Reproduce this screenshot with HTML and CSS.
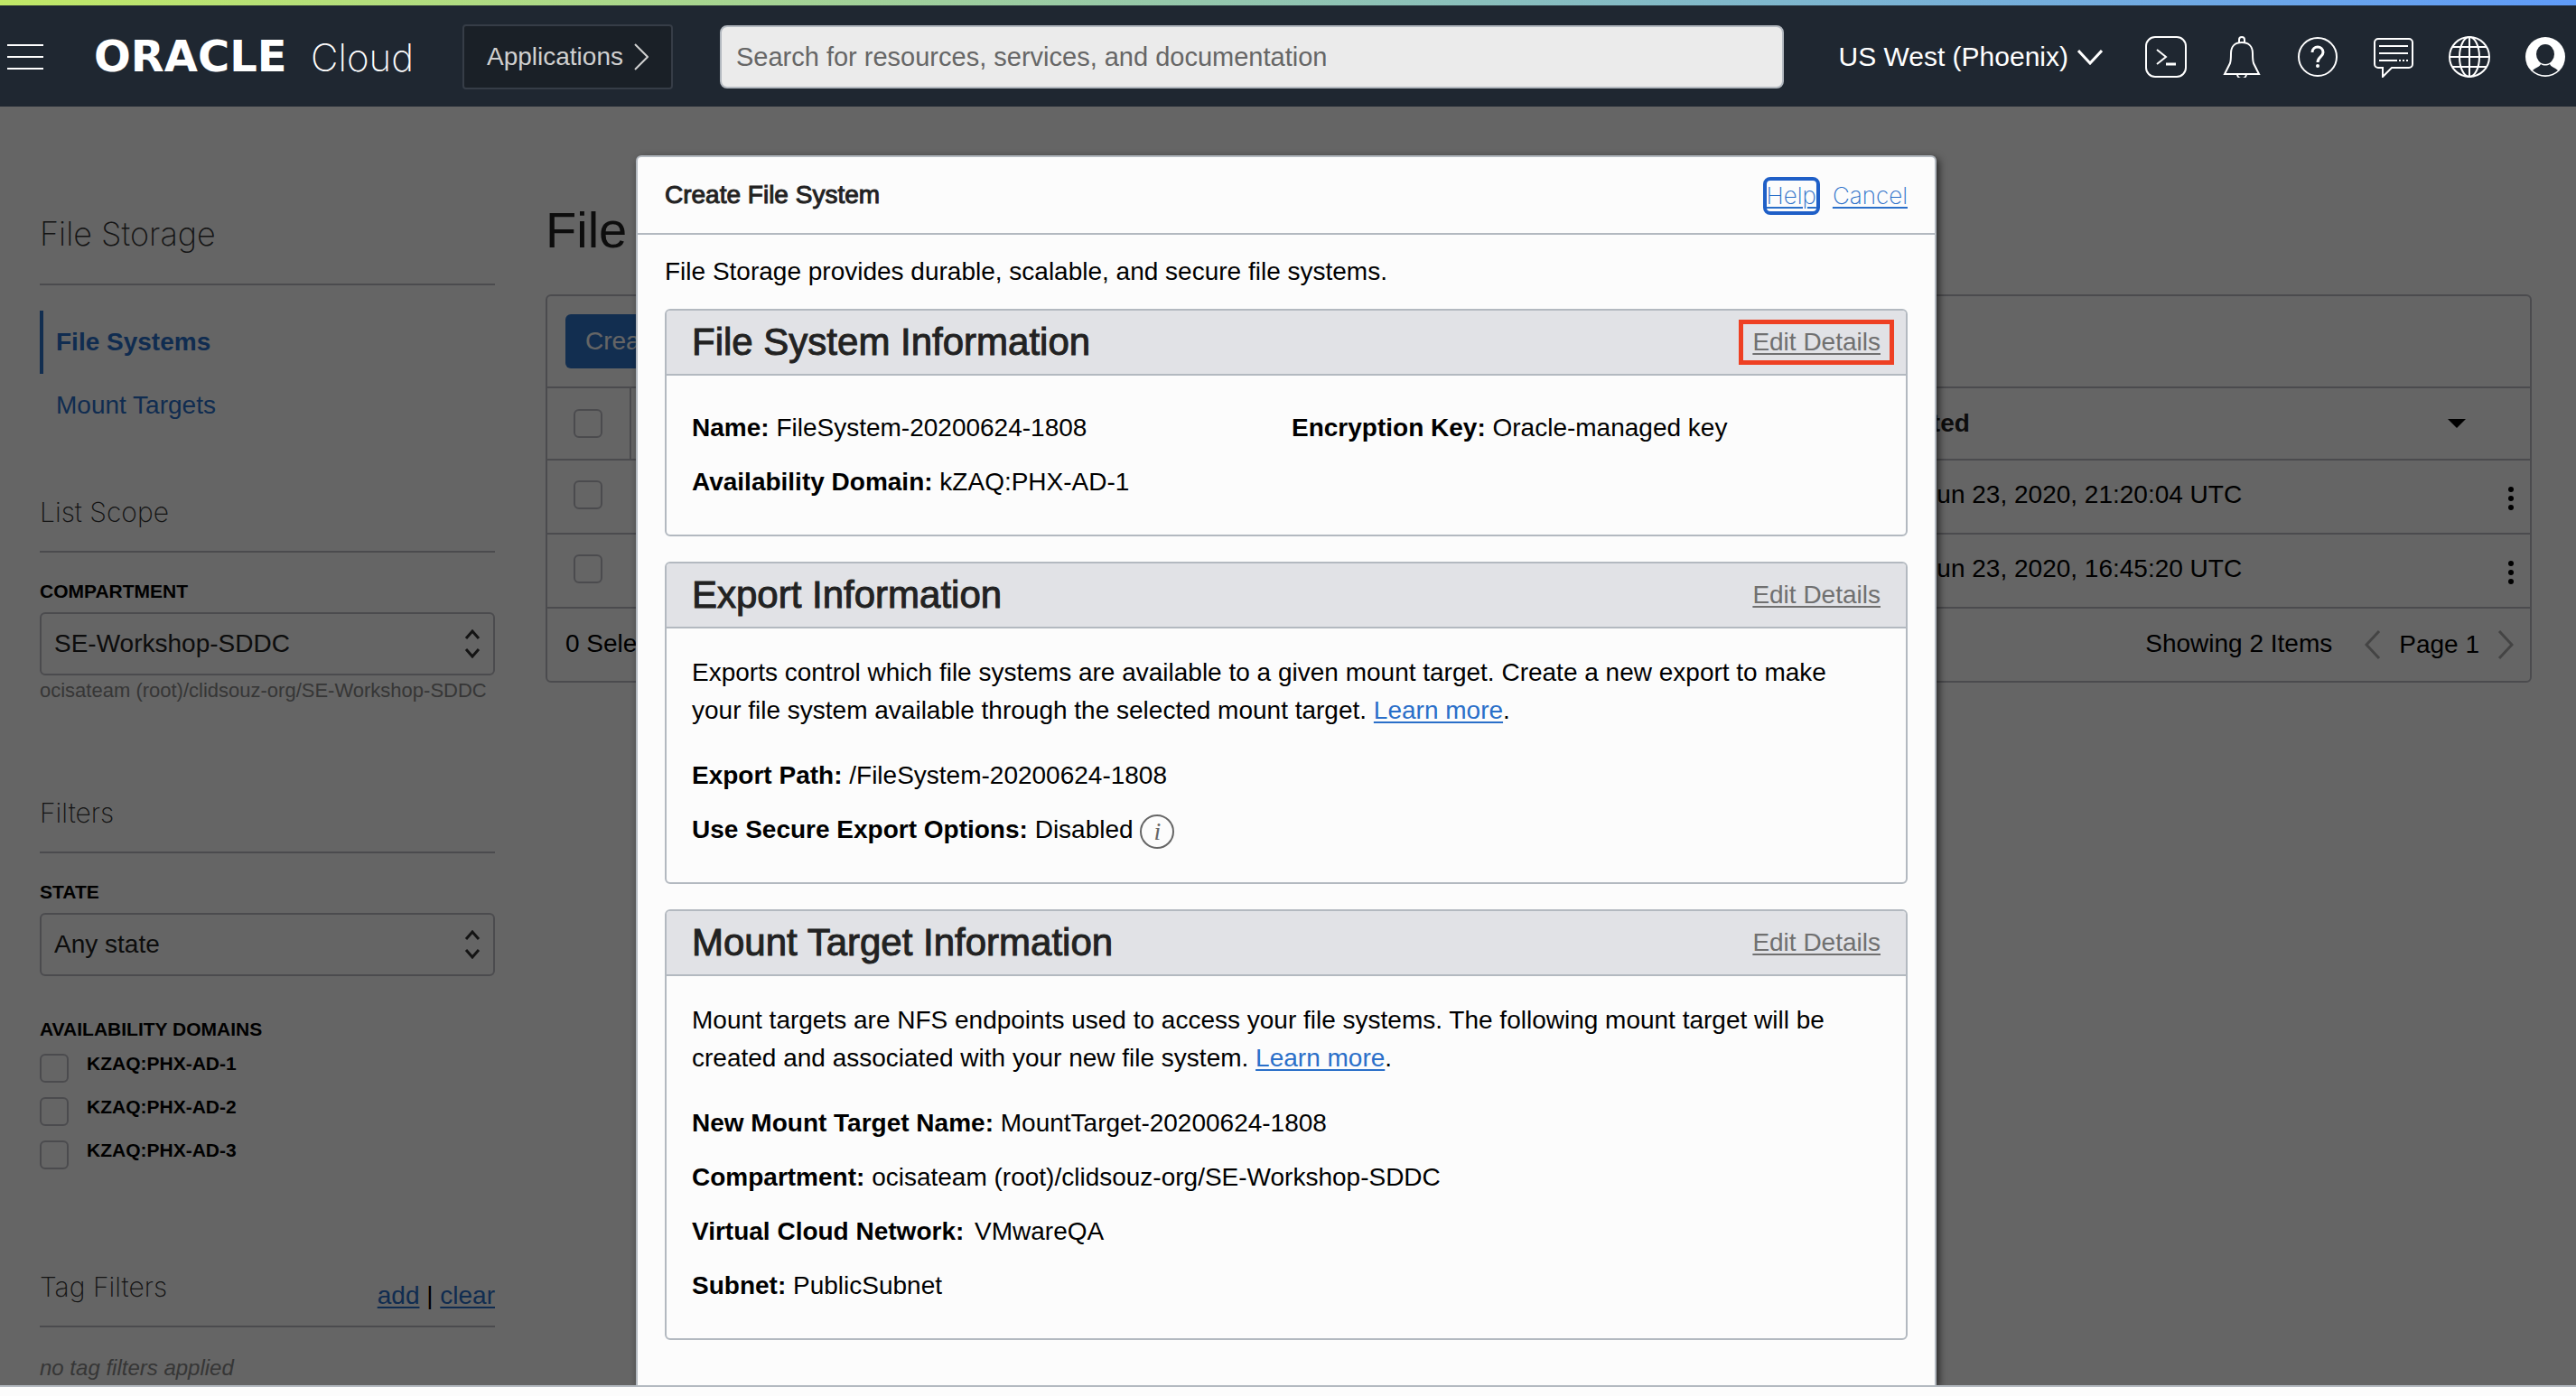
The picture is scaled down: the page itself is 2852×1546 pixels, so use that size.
FILE: index.html
```html
<!DOCTYPE html>
<html lang="en">
<head>
<meta charset="utf-8">
<title>Create File System</title>
<link rel="stylesheet" href="styles.css">
</head>
<body>
<div class="shell">
  <header class="topbar">
    <button class="icon-btn menu-btn" type="button">
      <svg viewBox="0 0 40 40" width="40" height="40"><path d="M0 7h40M0 20h40M0 33h40" stroke="#fff" stroke-width="2"/></svg>
    </button>
    <a class="brand" href="#"><span class="brand-name">ORACLE</span><span class="brand-product">Cloud</span></a>
    <button class="apps-btn" type="button">Applications
      <svg viewBox="0 0 16 30" width="16" height="30" fill="none"><path d="M1 1l14 14L1 29" stroke="#d0d0d0" stroke-width="2"/></svg>
    </button>
    <input class="search" type="search" placeholder="Search for resources, services, and documentation">
    <button class="region-btn" type="button">US West (Phoenix)
      <svg viewBox="0 0 28 17" width="28" height="17" fill="none"><path d="M1 1l13 14L27 1" stroke="#fff" stroke-width="3"/></svg>
    </button>
    <nav class="tools">
      <button class="icon-btn" type="button">
        <svg viewBox="0 0 46 46" width="46" height="46" fill="none" stroke="#fff" stroke-width="2"><rect x="1" y="1" width="44" height="44" rx="10"/><path d="M13 15l10 8-10 8"/><path d="M23 31h11" stroke-width="3"/></svg>
      </button>
      <button class="icon-btn" type="button">
        <svg viewBox="0 0 46 46" width="46" height="46" fill="none" stroke="#fff" stroke-width="2"><path d="M20 8V4a3 3 0 0 1 6 0v4"/><path d="M4 42l6-12c1-3 1-6 1-11C11 11 16 7 23 7s12 4 12 12c0 5 0 8 1 11l6 12z"/><path d="M18 42a5 5 0 0 0 10 0"/></svg>
      </button>
      <button class="icon-btn" type="button">
        <svg viewBox="0 0 46 46" width="46" height="46" fill="none" stroke="#fff" stroke-width="2"><circle cx="23" cy="23" r="21"/><path d="M17 18c0-8 12-8 12 0 0 5-6 5-6 11" stroke-width="3"/><circle cx="23" cy="33" r="1"/></svg>
      </button>
      <button class="icon-btn" type="button">
        <svg viewBox="0 0 46 46" width="46" height="46" fill="none" stroke="#fff" stroke-width="2"><path d="M6 3h34a4 4 0 0 1 4 4v24a4 4 0 0 1-4 4H21L11 45V35H6a4 4 0 0 1-4-4V7a4 4 0 0 1 4-4z"/><path d="M7 11h32M7 19h32M7 27h20"/><path d="M29 27h10" stroke-dasharray="2 2"/></svg>
      </button>
      <button class="icon-btn" type="button">
        <svg viewBox="0 0 46 46" width="46" height="46" fill="none" stroke="#fff" stroke-width="2"><circle cx="23" cy="23" r="22"/><ellipse cx="23" cy="23" rx="11" ry="22"/><path d="M23 1v44M1 23h44M4 12h38M4 34h38"/></svg>
      </button>
      <button class="icon-btn" type="button">
        <svg viewBox="0 0 46 46" width="46" height="46"><circle cx="23" cy="23" r="22" fill="#fff"/><ellipse cx="23" cy="20" rx="10" ry="11" fill="#1f2731"/><path d="M9 38c3-3 8-4 9-7 3 2 7 2 10 0 1 3 6 4 9 7-8 7-20 7-28 0z" fill="#1f2731"/></svg>
      </button>
    </nav>
  </header>

  <div class="stage">
    <div class="page">
      <aside class="sidebar">
        <h2 class="side-title">File Storage</h2>
        <nav class="side-nav">
          <a class="side-link side-link-active" href="#">File Systems</a>
          <a class="side-link" href="#">Mount Targets</a>
        </nav>

        <h3 class="side-heading">List Scope</h3>
        <label class="field-label" for="compartment">COMPARTMENT</label>
        <div class="select-wrap">
          <select id="compartment" class="select"><option>SE-Workshop-SDDC</option></select>
          <svg class="select-arrows" viewBox="0 0 18 32" width="18" height="32" fill="none"><path d="M2 10l7-8 7 8M2 22l7 8 7-8" stroke="#333" stroke-width="3"/></svg>
        </div>
        <p class="field-hint">ocisateam (root)/clidsouz-org/SE-Workshop-SDDC</p>

        <h3 class="side-heading side-heading-filters">Filters</h3>
        <label class="field-label" for="state">STATE</label>
        <div class="select-wrap">
          <select id="state" class="select"><option>Any state</option></select>
          <svg class="select-arrows" viewBox="0 0 18 32" width="18" height="32" fill="none"><path d="M2 10l7-8 7 8M2 22l7 8 7-8" stroke="#333" stroke-width="3"/></svg>
        </div>
        <fieldset class="domains">
          <legend class="field-label">AVAILABILITY DOMAINS</legend>
          <label class="domain"><input class="check" type="checkbox">KZAQ:PHX-AD-1</label>
          <label class="domain"><input class="check" type="checkbox">KZAQ:PHX-AD-2</label>
          <label class="domain"><input class="check" type="checkbox">KZAQ:PHX-AD-3</label>
        </fieldset>

        <div class="side-heading side-heading-tags">
          <h3 class="side-heading-text">Tag Filters</h3>
          <span class="tag-actions"><a href="#">add</a> | <a href="#">clear</a></span>
        </div>
        <p class="empty-note">no tag filters applied</p>
      </aside>

      <main class="main">
        <h1 class="page-title">File Systems</h1>
        <section class="panel">
          <div class="toolbar"><button class="create-btn" type="button">Create File System</button></div>
          <table class="table">
            <colgroup><col class="col-check"><col><col class="col-created"><col class="col-menu"></colgroup>
            <thead>
              <tr>
                <th class="cell-check"><input class="check" type="checkbox"></th>
                <th></th>
                <th colspan="2" class="cell-sort"><span class="sort">Created <svg viewBox="0 0 20 10" width="20" height="10"><path d="M0 0h20L10 10z"/></svg></span></th>
              </tr>
            </thead>
            <tbody>
              <tr>
                <td class="cell-check"><input class="check" type="checkbox"></td>
                <td></td>
                <td class="cell-date">Tue, Jun 23, 2020, 21:20:04 UTC</td>
                <td class="cell-menu"><button class="icon-btn" type="button"><svg viewBox="0 0 6 28" width="6" height="28"><circle cx="3" cy="4" r="3"/><circle cx="3" cy="14" r="3"/><circle cx="3" cy="24" r="3"/></svg></button></td>
              </tr>
              <tr>
                <td class="cell-check"><input class="check" type="checkbox"></td>
                <td></td>
                <td class="cell-date">Tue, Jun 23, 2020, 16:45:20 UTC</td>
                <td class="cell-menu"><button class="icon-btn" type="button"><svg viewBox="0 0 6 28" width="6" height="28"><circle cx="3" cy="4" r="3"/><circle cx="3" cy="14" r="3"/><circle cx="3" cy="24" r="3"/></svg></button></td>
              </tr>
            </tbody>
          </table>
          <div class="table-footer">
            <span class="count">0 Selected</span>
            <span class="count count-total">Showing 2 Items</span>
            <button class="icon-btn" type="button"><svg viewBox="0 0 18 32" width="18" height="32" fill="none"><path d="M16 1L2 16l14 15" stroke="#aaa" stroke-width="3"/></svg></button>
            <span>Page 1</span>
            <button class="icon-btn" type="button"><svg viewBox="0 0 18 32" width="18" height="32" fill="none"><path d="M2 1l14 15L2 31" stroke="#aaa" stroke-width="3"/></svg></button>
          </div>
        </section>
      </main>
    </div>

    <div class="backdrop">
      <div class="modal" role="dialog">
        <div class="modal-header">
          <h2 class="modal-title">Create File System</h2>
          <a class="modal-link modal-link-focus" href="#">Help</a>
          <a class="modal-link" href="#">Cancel</a>
        </div>
        <div class="modal-body">
          <p class="intro">File Storage provides durable, scalable, and secure file systems.</p>

          <section class="card">
            <div class="card-header">
              <h3 class="card-title">File System Information</h3>
              <a class="edit-link edit-link-marked" href="#">Edit Details</a>
            </div>
            <div class="card-body card-columns">
              <dl class="facts">
                <div class="fact"><dt>Name:</dt> <dd>FileSystem-20200624-1808</dd></div>
                <div class="fact"><dt>Availability Domain:</dt> <dd>kZAQ:PHX-AD-1</dd></div>
              </dl>
              <dl class="facts">
                <div class="fact"><dt>Encryption Key:</dt> <dd>Oracle-managed key</dd></div>
              </dl>
            </div>
          </section>

          <section class="card">
            <div class="card-header">
              <h3 class="card-title">Export Information</h3>
              <a class="edit-link" href="#">Edit Details</a>
            </div>
            <div class="card-body">
              <p class="card-text">Exports control which file systems are available to a given mount target. Create a new export to make your file system available through the selected mount target. <a href="#">Learn more</a>.</p>
              <dl class="facts">
                <div class="fact"><dt>Export Path:</dt> <dd>/FileSystem-20200624-1808</dd></div>
                <div class="fact"><dt>Use Secure Export Options:</dt> <dd>Disabled <button class="info" type="button">i</button></dd></div>
              </dl>
            </div>
          </section>

          <section class="card">
            <div class="card-header">
              <h3 class="card-title">Mount Target Information</h3>
              <a class="edit-link" href="#">Edit Details</a>
            </div>
            <div class="card-body">
              <p class="card-text">Mount targets are NFS endpoints used to access your file systems. The following mount target will be created and associated with your new file system. <a href="#">Learn more</a>.</p>
              <dl class="facts">
                <div class="fact"><dt>New Mount Target Name:</dt> <dd>MountTarget-20200624-1808</dd></div>
                <div class="fact"><dt>Compartment:</dt> <dd>ocisateam (root)/clidsouz-org/SE-Workshop-SDDC</dd></div>
                <div class="fact"><dt>Virtual Cloud Network:</dt> <dd class="network">VMwareQA</dd></div>
                <div class="fact"><dt>Subnet:</dt> <dd>PublicSubnet</dd></div>
              </dl>
            </div>
          </section>
        </div>
      </div>
    </div>
  </div>
  <footer class="bottombar"></footer>
</div>
</body>
</html>
```

FILE: styles.css
```css
* { box-sizing: border-box; }

body {
  margin: 0;
  background: #fcfcfc;
  color: #000;
  font-family: "Liberation Sans", Arial, sans-serif;
  font-size: 28px;
  line-height: 42px;
}

h1, h2, h3, p, dl, dd, fieldset { margin: 0; padding: 0; border: 0; }
h1, h2, h3 { font-weight: 400; }
a { color: #2a6fc9; text-decoration-thickness: 2px; text-underline-offset: 3px; }
button { font: inherit; color: inherit; cursor: pointer; }
svg { display: block; }

.icon-btn { display: block; padding: 0; border: 0; background: none; }

.shell { display: flex; flex-direction: column; height: 100vh; }

/* Top bar */
.topbar {
  position: relative;
  display: flex;
  align-items: center;
  padding: 8px 11px 0 8px;
  height: 118px;
  flex: none;
  color: #fff;
  background: linear-gradient(90deg, #c1e867, #80b8cc 68%, #5f9bf8) top / 100% 6px no-repeat #1f2731;
}
.menu-btn { margin-right: 56px; }
.brand {
  display: flex;
  align-items: baseline;
  justify-content: space-between;
  width: 354px;
  margin-right: 54px;
  color: #fff;
  text-decoration: none;
}
.brand-name { font: 700 48px/60px "DejaVu Sans", sans-serif; }
.brand-product { font: 200 42px/60px Inter, sans-serif; }
.apps-btn {
  display: flex;
  align-items: center;
  gap: 12px;
  height: 72px;
  padding: 0 25px;
  border: 2px solid #363d47;
  border-radius: 4px;
  background: #1a2027;
  color: #d0d0d0;
}
.search {
  flex: 1;
  min-width: 0;
  height: 70px;
  margin: 0 60px 0 52px;
  padding: 0 16px;
  border: 2px solid #b3b9c0;
  border-radius: 8px;
  background: #ebebeb;
  font: inherit;
  font-size: 29px;
}
.search::placeholder { color: #666; opacity: 1; }
.region-btn {
  display: flex;
  align-items: center;
  gap: 10px;
  padding: 0;
  border: 0;
  background: none;
  font-size: 30px;
  white-space: nowrap;
}
.tools { display: flex; gap: 38px; margin-left: 47px; }

/* Page below the dialog */
.stage { position: relative; flex: 1; min-height: 0; overflow: hidden; }
.page { display: flex; gap: 56px; padding: 0 49px 0 44px; }

.sidebar { flex: 0 0 504px; padding-top: 118px; }
.side-title {
  padding-bottom: 30px;
  border-bottom: 2px solid #bbbbc3;
  color: #333;
  font: 200 36px/46px Inter, sans-serif;
}
.side-title { padding-bottom: 32px; }
.side-nav { display: flex; flex-direction: column; margin: 28px 0 62px; }
.side-link {
  padding-left: 14px;
  border-left: 4px solid transparent;
  line-height: 70px;
  text-decoration: none;
}
.side-link-active { border-color: #2f73c8; font-weight: 700; }
.side-heading {
  margin-bottom: 29px;
  padding-bottom: 22px;
  border-bottom: 2px solid #bbbbc3;
  color: #333;
  font: 200 30px/42px Inter, sans-serif;
}
.side-heading-filters { margin-top: 99px; }
.side-heading-tags {
  display: flex;
  justify-content: space-between;
  height: 66px;
  margin-top: 109px;
}
.side-heading-text { font: inherit; }
.tag-actions {
  padding-top: 10px;
  color: #000;
  font: 28px/42px "Liberation Sans", Arial, sans-serif;
}
.field-label {
  display: block;
  margin-bottom: 9px;
  padding: 0;
  font-size: 21px;
  font-weight: 700;
  line-height: 28px;
}
.select-wrap { display: grid; align-items: center; }
.select {
  grid-area: 1 / 1;
  width: 100%;
  height: 70px;
  padding: 0 14px;
  border: 2px solid #bbbbc3;
  border-radius: 6px;
  background: none;
  appearance: none;
  color: #222;
  font: inherit;
}
.select-arrows { grid-area: 1 / 1; justify-self: end; margin-right: 16px; pointer-events: none; }
.field-hint { margin-top: 2px; color: #888; font-size: 22px; line-height: 30px; }
.domains { display: grid; gap: 16px; margin-top: 45px; }
.domains .field-label { margin-bottom: 13px; }
.domain {
  display: flex;
  align-items: flex-start;
  gap: 20px;
  font-size: 21px;
  font-weight: 700;
  line-height: 22px;
}
.check {
  display: block;
  flex: none;
  width: 32px;
  height: 32px;
  margin: 0;
  border: 2px solid #bbbbc3;
  border-radius: 6px;
  appearance: none;
}
.empty-note { color: #888; font-size: 24px; font-style: italic; line-height: 32px; white-space: nowrap; }

.main { flex: 1; min-width: 0; padding-top: 105px; }
.page-title { margin-bottom: 39px; color: #222; font-size: 56px; line-height: 64px; }
.panel { border: 2px solid #bbbbc3; border-radius: 6px; }
.toolbar { padding: 20px; border-bottom: 2px solid #bbbbc3; }
.create-btn {
  display: block;
  height: 60px;
  padding: 0 22px;
  border: 0;
  border-radius: 6px;
  background: #2f73c8;
  color: #fcfcfc;
}
.table { width: 100%; border-spacing: 0; table-layout: fixed; }
.col-check { width: 93px; }
.col-created { width: 32%; }
.col-menu { width: 42px; }
.table th { height: 80px; padding: 0; border-bottom: 2px solid #bbbbc3; text-align: left; }
.table td { height: 82px; padding: 0 0 4px; border-bottom: 2px solid #bbbbc3; }
.table .cell-check { padding-left: 29px; }
.table th.cell-check { border-right: 2px solid #bbbbc3; }
.table th.cell-sort { padding: 0 71px 0 20px; }
.table .cell-date { padding-left: 11px; }
.table .cell-menu { padding: 4px 0 0 18px; }
.sort { display: flex; align-items: center; justify-content: space-between; color: #222; }
.table-footer { display: flex; align-items: center; height: 80px; padding: 0 18px 0 20px; gap: 20px; }
.count { padding-bottom: 2px; }
.count-total { margin: 0 16px 0 auto; }

/* Dialog */
.backdrop {
  position: absolute;
  inset: 0;
  display: flex;
  justify-content: center;
  padding: 54px 4px 0 0;
  background: rgba(0, 0, 0, 0.6);
}
.modal {
  width: 1440px;
  max-width: 100%;
  border: 2px solid #b3b9c0;
  border-bottom: 0;
  border-radius: 6px 6px 0 0;
  background: #fcfcfc;
  box-shadow: 3px 3px 8px rgba(0, 0, 0, 0.6);
}
.modal-header {
  display: flex;
  align-items: center;
  gap: 18px;
  height: 86px;
  padding: 0 30px;
  border-bottom: 2px solid #b3b9c0;
}
.modal-title {
  margin-right: auto;
  color: #222;
  font-size: 28px;
  line-height: 42px;
  -webkit-text-stroke: 1px #222;
}
.modal-link { margin-top: 2px; font: 200 26px/34px Inter, sans-serif; }
.modal-link-focus { border-radius: 4px; outline: 4px solid #1f5fc7; }
.modal-body { display: grid; gap: 28px; padding: 20px 30px; }
.intro { margin-bottom: -8px; }

.card { border: 2px solid #b3b9c0; border-radius: 6px; overflow: hidden; }
.card-header {
  display: flex;
  align-items: center;
  justify-content: space-between;
  height: 72px;
  padding: 0 28px;
  border-bottom: 2px solid #b3b9c0;
  background: #e1e2e6;
}
.card-title { color: #222; font-size: 42px; line-height: 48px; -webkit-text-stroke: 1px #222; }
.edit-link { color: #707070; line-height: 40px; }
.edit-link-marked { margin: 0 -15px; padding: 0 10px; border: 5px solid #ee4023; }
.card-body { padding: 28px; }
.card-columns { display: grid; grid-template-columns: 1fr 1fr; column-gap: 12px; }
.card-text { margin-bottom: 21px; }
.fact { padding: 9px 0; }
.fact dt, .fact dd { display: inline; }
.fact dt { font-weight: 700; }
.network { padding-left: 4px; }
.info {
  width: 38px;
  height: 38px;
  padding: 0;
  border: 2px solid #666;
  border-radius: 50%;
  background: none;
  color: #666;
  font: italic 28px/32px "Liberation Serif", serif;
  vertical-align: middle;
}

.bottombar { flex: none; height: 12px; border-top: 2px solid #b3b9c0; background: #fcfcfc; }
```
